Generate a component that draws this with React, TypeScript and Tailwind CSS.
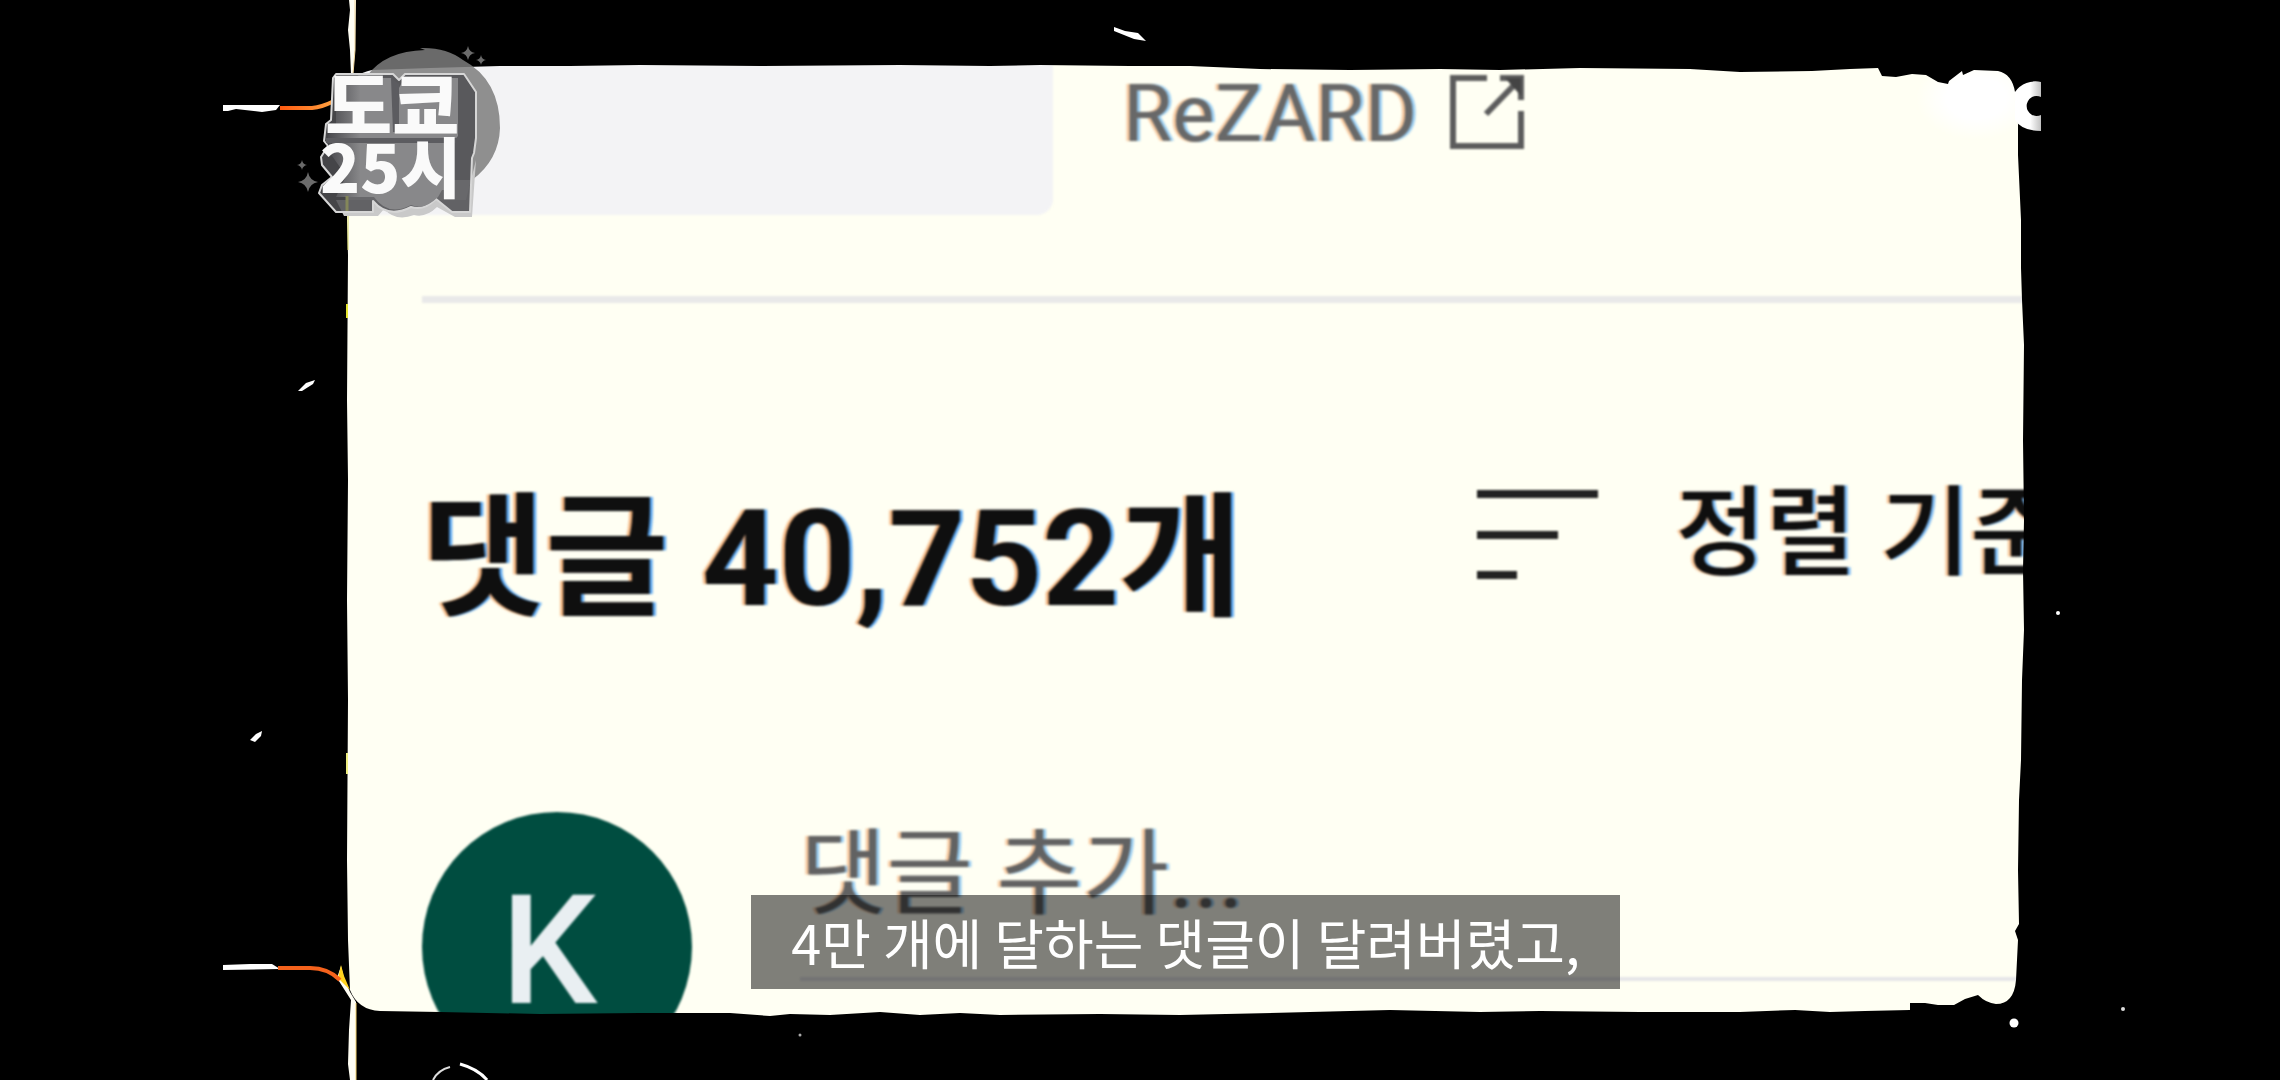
import React from "react";

const EDGE =
  "M348 90 Q352 74 372 70 L430 68 L500 66 L570 66 L640 65 L760 66 L900 65 L990 66 L1040 65 L1130 66 L1190 66 L1260 69 L1350 70 L1440 69 L1500 70 L1580 68 L1690 69 L1740 72 L1812 71 L1850 69 L1878 68 L1882 76 L1896 77 L1912 74 L1926 75 L1938 82 L1948 84 L1949 81 L1962 71 L1963 75 L1974 70 L1998 71 Q2012 74 2015 92 L2018 124 L2018 155 L2021 220 L2021 268 L2022 300 L2024 345 L2023 440 L2024 520 L2023 570 L2024 630 L2022 680 L2021 760 L2019 800 L2018 870 L2019 924 L2015 931 L2018 940 L2016 980 Q2014 1004 1996 1004 Q1986 1003 1978 995 L1965 999 L1954 1005 L1938 1005 L1925 1003 L1910 1003 L1910 1010 L1865 1011 L1830 1012 L1795 1010 L1740 1012 L1640 1012 L1540 1011 L1480 1012 L1390 1010 L1310 1012 L1180 1015 L1100 1014 L1000 1015 L960 1013 L920 1015 L880 1012 L830 1015 L790 1014 L770 1016 L730 1013 L640 1013 L540 1014 L440 1012 L380 1011 Q358 1010 350 990 L348 940 L347 860 L348 700 L347 600 L348 480 L347 400 L348 255 L347 220 Z";

function Sparkle({ x, y, r }: { x: number; y: number; r: number }) {
  return (
    <path
      transform={`translate(${x} ${y}) scale(${r})`}
      d="M0 -1 Q0.15 -0.15 1 0 Q0.15 0.15 0 1 Q-0.15 0.15 -1 0 Q-0.15 -0.15 0 -1Z"
      fill="#6b6b6b"
    />
  );
}

function FilmFrame() {
  return (
    <svg
      aria-hidden="true"
      className="pointer-events-none absolute inset-0 h-full w-full"
      viewBox="0 0 2280 1080"
      preserveAspectRatio="none"
    >
      <defs>
        <linearGradient id="burnTop" x1="0" x2="1">
          <stop offset="0" stopColor="#ff5a10" />
          <stop offset="1" stopColor="#ffa040" />
        </linearGradient>
        <linearGradient id="fade" gradientUnits="userSpaceOnUse" x1="2030" x2="2042" y1="0" y2="0">
          <stop offset="0" stopColor="#fff" />
          <stop offset="1" stopColor="#bbb" />
        </linearGradient>
        <radialGradient id="glow">
          <stop offset="0.5" stopColor="#fff" />
          <stop offset="1" stopColor="#fff" stopOpacity="0" />
        </radialGradient>
      </defs>
      <ellipse cx="1976" cy="98" rx="60" ry="42" fill="url(#glow)" />
      <path fillRule="evenodd" fill="#000" d={`M0 0H2280V1080H0Z ${EDGE}`} />
      <path d="M349 0 H356 L355 50 L353 74 L351 74 L350 50 L348 30 L350 10Z" fill="#fffef4" />
      <path d="M355 0 V50 L353 74" stroke="#f3d9a0" strokeWidth="1" fill="none" />
      <path d="M337 978 L341 966 L344 978 L350 992 L356 1002 V1080 H350 L348 1064 L349 1030 L351 1000 Z" fill="#fffef4" />
      <path d="M338 978 L341 965 L344 976 L350 990 Z" fill="#ffd21f" />
      <path d="M356 1003 V1080" stroke="#f3d270" strokeWidth="1" fill="none" />
      <path d="M223 105 H280 L276 110 L262 112 L236 109 L228 111 L223 111Z" fill="#fff" />
      <path d="M280 108 H312 Q322 107 332 102" stroke="url(#burnTop)" strokeWidth="4" fill="none" />
      <path d="M223 965 L250 964 H272 L280 969 L223 970Z" fill="#fff" />
      <path d="M278 968 H310 Q328 968 340 980" stroke="#f5621c" strokeWidth="4" fill="none" />
      <path d="M348 215 V250" stroke="#d8d860" strokeWidth="1" />
      <path d="M347 304 V318" stroke="#e6e630" strokeWidth="2" />
      <path d="M347 753 V774" stroke="#eeee80" strokeWidth="2" />
      <path d="M1114 27 L1125 31 L1138 33 L1146 41 L1134 39 L1124 35 L1114 31Z" fill="#fff" />
      <path d="M298 391 L306 383 L315 380 L313 384 L302 391Z" fill="#fff" />
      <path d="M250 740 L256 734 L262 731 L261 736 L255 742Z" fill="#fff" />
      <path d="M433 1080 Q438 1070 450 1067" stroke="#ddd" strokeWidth="2" fill="none" />
      <path d="M460 1064 Q478 1069 487 1080" stroke="#fff" strokeWidth="3" fill="none" />
      <circle cx="2014" cy="1023" r="4.5" fill="#fff" />
      <circle cx="2123" cy="1009" r="2" fill="#ddd" />
      <circle cx="2058" cy="613" r="2" fill="#fff" />
      <circle cx="800" cy="1035" r="1.5" fill="#aaa" />
      <path d="M2041 82 A25 25 0 0 0 2015 92 V120 Q2022 131 2041 131 V115 A10 10 0 1 1 2041 97Z" fill="url(#fade)" />
    </svg>
  );
}

function ShowLogo() {
  return (
    <svg
      role="img"
      aria-label="도쿄 25시"
      className="absolute top-10 left-[290px] h-[190px] w-[220px]"
      viewBox="290 40 220 190"
    >
      <defs>
        <linearGradient id="face" x1="0" x2="1">
          <stop offset="0" stopColor="#4a4a4e" />
          <stop offset="0.25" stopColor="#88888a" />
          <stop offset="1" stopColor="#88888a" />
        </linearGradient>
      </defs>
      <path
        d="M367 76 Q385 51 425 50 L420 48 Q446 47 463 60 Q500 80 500 128 Q499 160 472 180 L420 180 L367 130Z"
        fill="#7c7c7c"
        fillOpacity="0.85"
      />
      <path
        d="M344 216 H378 L384 209 Q396 222 414 215 Q426 218 437 207 L455 217 H472 L476 160 L466 200 L336 200Z"
        fill="#c9c9c9"
      />
      <path
        d="M336 74 H393 L399 80 L405 74 H464 L476 92 V138 L474 153 L472 158 L470 212 H452 L436 199 Q424 211 411 207 Q388 219 373 201 V212 H336 L319 193 L322 185 L332 177 L322 165 L321 157 L328 146 L324 141 L326 124 L331 120 L333 78Z"
        fill="#505054"
        fillOpacity="0.86"
        stroke="#d6d6d6"
        strokeWidth="2"
        strokeLinejoin="round"
      />
      <path
        d="M336 78 H391 L397 92 L404 78 H458 V136 L452 143 V190 H442 L438 197 Q424 211 411 205 Q388 217 374 197 H336 L346 176 L328 150 V136 L336 124Z"
        fill="url(#face)"
      />
      <path d="M326 138 H456 V143 H326Z M391 78 L399 84 V132 H393Z" fill="#5c5c60" />
      <path d="M347 196 V211" stroke="#84875a" strokeWidth="3" />
      <g fill="#fafafa" className="font-['Noto_Sans_CJK_KR',sans-serif] font-black">
        <text x="325" y="133" fontSize="73">도쿄</text>
        <text x="320" y="193" fontSize="66">25시</text>
      </g>
      <Sparkle x={468} y={53} r={7} />
      <Sparkle x={481} y={60} r={5} />
      <Sparkle x={302} y={165} r={5} />
      <Sparkle x={308} y={182} r={10} />
    </svg>
  );
}

export default function App() {
  return (
    <div className="relative flex h-screen w-full flex-col overflow-hidden bg-black pt-16 pr-[11%] pb-16 pl-[15%] font-[Roboto,'Noto_Sans_CJK_KR',sans-serif]">
      <main className="relative flex min-h-0 flex-1 flex-col overflow-hidden bg-[#fffff3]">
        <div className="flex min-h-0 flex-1 flex-col blur-[1px]">
          <div className="flex shrink-0 items-start">
            <div className="h-[151px] w-[711px] shrink-0 rounded-br-2xl bg-[#f3f3f5]" />
            <a
              href="#rezard"
              className="ml-[70px] flex items-start gap-8 pt-[10px] text-[80px] leading-none text-[#686868] [text-shadow:-3px_0_1px_#f0a06099,3px_0_1px_#50a8f099]"
            >
              ReZARD
              <svg aria-hidden="true" className="size-[76px]" viewBox="0 0 76 76" fill="none" stroke="#5c5c5c" strokeWidth="6">
                <path d="M38 4 H4 V72 H72 V37 M72 26 V4 H51" />
                <path d="M37 40 L70 6" />
                <path d="M56 4 H72 V22Z" fill="#444" stroke="none" />
              </svg>
            </a>
          </div>

          <hr className="mt-[81px] ml-20 h-[7px] shrink-0 border-0 bg-[#e9e9e9]" />

          <div className="mt-[182px] ml-20 flex shrink-0 items-start gap-[234px] whitespace-nowrap text-[#0f0f0f]">
            <h1 className="pt-2 text-[134px] leading-none font-bold [text-shadow:-3px_0_1px_#f0a060cc,3px_0_1px_#3090f0cc]">
              댓글 40,752개
            </h1>
            <button
              type="button"
              className="flex items-start gap-[78px] text-[98px] leading-none font-medium [text-shadow:-3px_0_1px_#f0a060aa,3px_0_1px_#3090f0aa]"
            >
              <svg aria-hidden="true" className="mt-[5px] h-[89px] w-[121px]" viewBox="0 0 121 89" fill="#222">
                <path d="M0 0H121V8H0ZM0 41H81V49H0ZM0 81H40V89H0Z" />
              </svg>
              정렬 기준
            </button>
          </div>

          <div className="mt-[185px] ml-20 flex shrink-0 items-start gap-[108px]">
            <div className="flex size-[270px] shrink-0 items-center justify-center rounded-full bg-[#004d40] pt-2 pr-4 text-[152px] leading-none font-medium text-[#e9eff2]">
              K
            </div>
            <input
              type="text"
              aria-label="댓글 추가"
              placeholder="댓글 추가..."
              className="h-[169px] min-w-0 flex-1 border-b-4 border-[#e6e6e8] pt-4 pb-[55px] text-[94px] leading-none outline-none [text-shadow:-3px_0_1px_#f0a06099,3px_0_1px_#50a8f099] placeholder:text-[#626262]"
            />
          </div>
        </div>
      </main>

      <FilmFrame />
      <ShowLogo />

      <div className="pointer-events-none absolute right-[11%] bottom-[91px] left-[15%] flex justify-center">
        <p className="bg-black/50 px-10 py-5 font-['Noto_Sans_CJK_KR',sans-serif] text-[54px] leading-[54px] whitespace-nowrap text-white">
          4만 개에 달하는 댓글이 달려버렸고,
        </p>
      </div>
    </div>
  );
}
